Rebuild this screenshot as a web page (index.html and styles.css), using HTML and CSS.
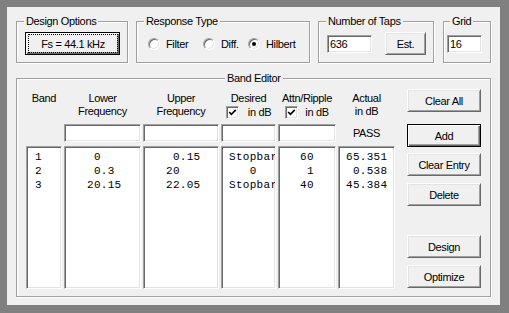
FILE: index.html
```html
<!DOCTYPE html>
<html lang="en">
<head>
    <meta charset="UTF-8">
    <title>Filter Design</title>
    <link rel="stylesheet" href="styles.css">
</head>
<body>
    <div class="dialog">
        <div class="top-row">
            <fieldset class="group design">
                <legend>Design Options</legend>
                <div class="group-row">
                    <button class="btn btn-default fs-button"><span class="focus">Fs = 44.1 kHz</span></button>
                </div>
            </fieldset>

            <fieldset class="group response">
                <legend>Response Type</legend>
                <div class="group-row">
                    <label class="radio radio-filter"><span class="radio-mark"></span>Filter</label>
                    <label class="radio radio-diff"><span class="radio-mark"></span>Diff.</label>
                    <label class="radio"><span class="radio-mark on"></span>Hilbert</label>
                </div>
            </fieldset>

            <fieldset class="group taps">
                <legend>Number of Taps</legend>
                <div class="group-row">
                    <input class="entry taps-entry" type="text" value="636">
                    <button class="btn est-button">Est.</button>
                </div>
            </fieldset>

            <fieldset class="group grid-group">
                <legend>Grid</legend>
                <div class="group-row">
                    <input class="entry grid-entry" type="text" value="16">
                </div>
            </fieldset>
        </div>

        <fieldset class="group band-editor">
            <legend>Band Editor</legend>
            <div class="band-body">
                <div class="band-table">
                    <div class="head">Band</div>
                    <div class="head">Lower<br>Frequency</div>
                    <div class="head">Upper<br>Frequency</div>
                    <div class="head">
                        Desired
                        <div class="head-line wide"><span class="check"><svg width="9" height="9" viewBox="0 0 9 9"><polyline points="1.2,4 3.4,6.3 7.8,1.8" fill="none" stroke="#000" stroke-width="1.7"/></svg></span>in dB</div>
                    </div>
                    <div class="head">
                        Attn/Ripple
                        <div class="head-line"><span class="check"><svg width="9" height="9" viewBox="0 0 9 9"><polyline points="1.2,4 3.4,6.3 7.8,1.8" fill="none" stroke="#000" stroke-width="1.7"/></svg></span>in dB</div>
                    </div>
                    <div class="head">Actual<br>in dB</div>

                    <div></div>
                    <input class="entry" type="text">
                    <input class="entry" type="text">
                    <input class="entry" type="text">
                    <input class="entry" type="text">
                    <div class="pass">PASS</div>

                    <div class="list list-band">1
2
3</div>
                    <div class="list list-lower"> 0
 0.3
20.15</div>
                    <div class="list list-upper"> 0.15
20
22.05</div>
                    <div class="list list-desired">Stopbar
   0
Stopbar</div>
                    <div class="list list-attn">60
 1
40</div>
                    <div class="list list-actual">65.351
 0.538
45.384</div>
                </div>

                <div class="band-buttons">
                    <button class="btn">Clear All</button>
                    <button class="btn btn-default add-button">Add</button>
                    <button class="btn clear-entry">Clear Entry</button>
                    <button class="btn delete-button">Delete</button>
                    <button class="btn design-button">Design</button>
                    <button class="btn optimize-button">Optimize</button>
                </div>
            </div>
        </fieldset>
    </div>
</body>
</html>
```

FILE: styles.css
```css
body {
    margin: 0;
    background: #808080;
    font-family: 'Liberation Sans', Arial, sans-serif;
    font-size: 11px;
    letter-spacing: -0.35px;
    color: #000;
}

.dialog {
    width: 493px;
    height: 298px;
    margin: 7px;
    box-sizing: border-box;
    padding: 7px 9px 0 9px;
    background: #f0f0f0;
}

/* etched group boxes */
.group {
    margin: 0;
    padding: 0;
    min-width: 0;
    box-sizing: border-box;
    border: 1px solid #a0a0a0;
    box-shadow: inset 1px 1px 0 #fff, 1px 1px 0 #fff;
}

.group legend {
    margin-left: 7px;
    padding: 0 2px;
    line-height: 14px;
    background: #f0f0f0;
}

.top-row {
    display: flex;
    gap: 8px;
}

.top-row .group {
    height: 49px;
}

.group-row {
    display: flex;
    align-items: center;
    height: 23px;
    margin-top: 4px;
    padding-left: 8px;
}

.design { width: 112px; }
.response { width: 174px; }
.taps { width: 116px; }

.grid-group {
    width: 48px;
    margin-left: auto;
}

.grid-group legend { margin-left: 6px; }
.grid-group .group-row { padding-left: 3px; }
.response .group-row { padding-left: 11px; }

/* classic 3d buttons */
.btn {
    height: 23px;
    padding: 0;
    box-sizing: border-box;
    background: #f0f0f0;
    border: 1px solid;
    border-color: #fff #696969 #696969 #fff;
    box-shadow: inset 1px 1px 0 #e3e3e3, inset -1px -1px 0 #a0a0a0;
    font: inherit;
    letter-spacing: inherit;
    color: #000;
}

.btn-default {
    border-color: #000;
    box-shadow: inset 1px 1px 0 #fff, inset -1px -1px 0 #696969, inset -2px -2px 0 #a0a0a0;
}

.fs-button {
    width: 95px;
    display: flex;
    padding: 1px 1px 1px 2px;
}

.focus {
    flex: 1;
    display: flex;
    align-items: center;
    justify-content: center;
    border: 1px dotted #000;
}

.est-button {
    width: 41px;
    margin-left: 13px;
}

/* sunken fields */
.entry, .list, .check, .radio-mark {
    box-sizing: border-box;
    background: #fff;
    border: 1px solid;
    border-color: #a0a0a0 #fff #fff #a0a0a0;
    box-shadow: inset 1px 1px 0 #696969, inset -1px -1px 0 #e3e3e3;
}

.entry {
    height: 18px;
    margin: 0;
    padding: 0 1px 0 2px;
    font: inherit;
    letter-spacing: inherit;
    outline: none;
}

.taps-entry { width: 45px; }
.grid-entry { width: 35px; }

.radio {
    display: flex;
    align-items: center;
    gap: 6px;
}

.radio-filter { width: 55px; }
.radio-diff { width: 45px; }

.radio-mark {
    width: 12px;
    height: 12px;
    border-radius: 50%;
    display: flex;
    align-items: center;
    justify-content: center;
}

.radio-mark.on::after {
    content: '';
    width: 4px;
    height: 4px;
    border-radius: 50%;
    background: #000;
}

/* band editor */
.band-editor {
    margin-top: 8px;
    height: 226px;
}

.band-editor legend { margin-left: 208px; }

.band-body {
    display: flex;
    gap: 12px;
    padding: 4px 9px 0 9px;
}

.band-table {
    margin-top: 3px;
    display: grid;
    grid-template-columns: 36px 77px 76px 55px 58px 57px;
    grid-template-rows: 32px 22px 143px;
    column-gap: 2px;
}

.head {
    text-align: center;
    line-height: 13px;
}

.head-line {
    display: flex;
    justify-content: center;
    align-items: center;
    gap: 7px;
    height: 14px;
}

.head-line.wide { gap: 9px; }

.check {
    width: 13px;
    height: 13px;
    display: flex;
    align-items: center;
    justify-content: center;
}

.band-table .entry {
    width: 100%;
}

.pass {
    height: 18px;
    line-height: 18px;
    text-align: center;
}

.list {
    overflow: hidden;
    white-space: pre;
    padding-top: 3px;
    font-family: 'Liberation Mono', 'Courier New', monospace;
    font-size: 11px;
    letter-spacing: 0.3px;
    line-height: 14px;
}

.list-band { padding-left: 8px; }
.list-lower { padding-left: 22px; }
.list-upper { padding-left: 22px; }
.list-desired { padding-left: 7px; }
.list-attn { padding-left: 21px; }
.list-actual { padding-left: 7px; }

.band-buttons {
    display: flex;
    flex-direction: column;
    width: 74px;
}

.add-button { margin-top: 12px; }
.clear-entry { margin-top: 6px; }
.delete-button { margin-top: 7px; }
.design-button { margin-top: 29px; }
.optimize-button { margin-top: 7px; }
```
